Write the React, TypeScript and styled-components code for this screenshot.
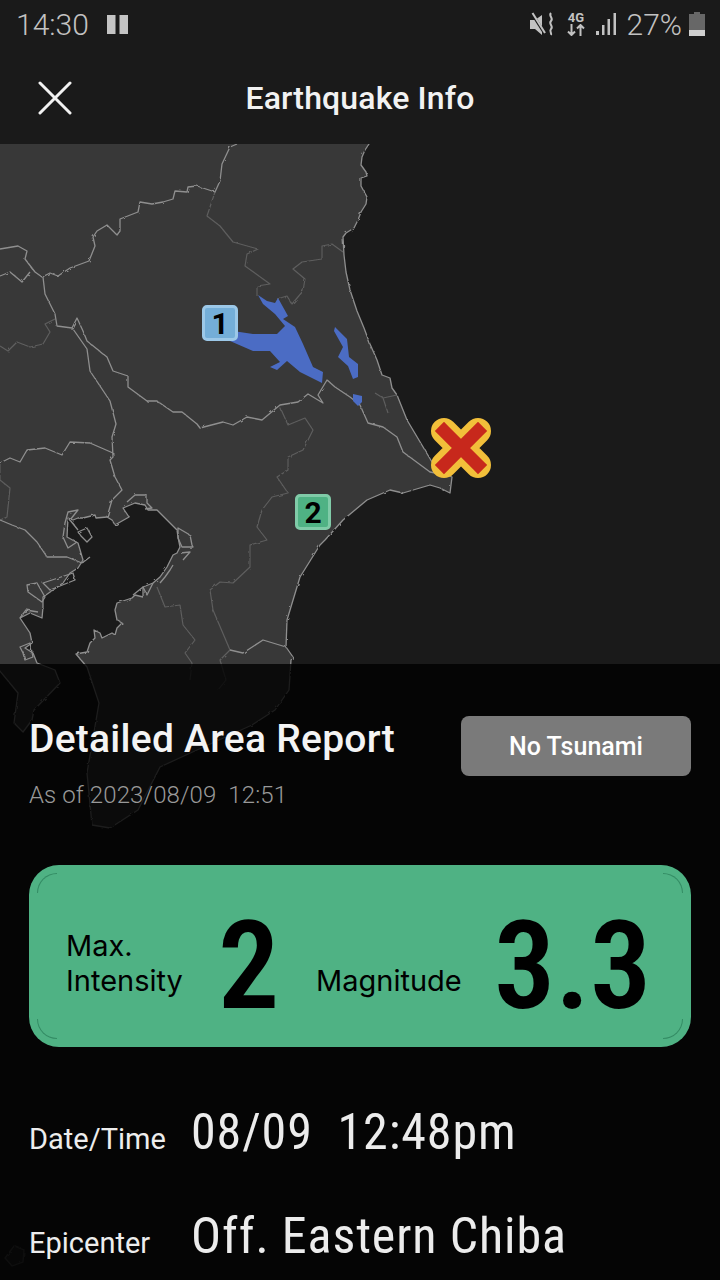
import styled, { createGlobalStyle } from 'styled-components';

const GlobalStyle = createGlobalStyle`
  html, body {
    margin: 0;
    padding: 0;
    background: #1a1a1a;
  }
  * {
    box-sizing: border-box;
  }
`;

const FONT = `Roboto, "Liberation Sans", sans-serif`;

const Page = styled.div`
  display: flex;
  flex-direction: column;
  width: 720px;
  height: 1280px;
  overflow: hidden;
  background: #1a1a1a;
  font-family: ${FONT};
`;

const StatusBar = styled.div`
  display: flex;
  align-items: center;
  justify-content: space-between;
  height: 50px;
  padding: 0 15px 2px 16px;
  color: #c2c2c2;
  font-size: 30px;
  font-weight: 300;
`;

const StatusGroup = styled.div`
  display: flex;
  align-items: center;
`;

const Clock = styled.span`
  margin-right: 18px;
`;

const Percent = styled.span`
  margin: 0 7px 0 10px;
`;

const NetworkBadge = styled.div`
  display: flex;
  flex-direction: column;
  align-items: center;
  gap: 1px;
  width: 19px;
  margin: 0 9px 0 13px;
  color: #c2c2c2;
  font-size: 13px;
  font-weight: 700;
  line-height: 11px;
`;

const Header = styled.header`
  position: relative;
  display: flex;
  align-items: center;
  justify-content: center;
  height: 94px;
  padding-top: 2px;
`;

const CloseButton = styled.button`
  position: absolute;
  left: 38px;
  top: 31px;
  display: flex;
  width: 34px;
  height: 34px;
  padding: 0;
  border: 0;
  background: none;
`;

const Title = styled.h1`
  margin: 0;
  color: #f2f2f2;
  font-size: 32px;
  font-weight: 500;
  letter-spacing: 0.15px;
`;

const MapStage = styled.div`
  position: relative;
  flex: 0 0 520px;
`;

const MapDrawing = styled.svg`
  position: absolute;
  top: 0;
  left: 0;
`;

const MapPin = styled.div<{ $x: number; $y: number; $fill: string; $edge: string }>`
  position: absolute;
  left: ${(p) => p.$x}px;
  top: ${(p) => p.$y}px;
  display: flex;
  align-items: center;
  justify-content: center;
  width: 36px;
  height: 36px;
  border: 3px solid ${(p) => p.$edge};
  border-radius: 5px;
  background: ${(p) => p.$fill};
  color: #000;
  font-size: 30px;
  font-weight: 700;
`;

const Panel = styled.section`
  position: relative;
  flex: 1;
  padding: 52px 29px 0 29px;
  background: rgba(0, 0, 0, 0.8);
`;

const ReportRow = styled.div`
  display: flex;
  align-items: flex-start;
  justify-content: space-between;
`;

const ReportTitle = styled.h2`
  margin: 0;
  color: #f4f4f4;
  font-size: 39px;
  font-weight: 500;
  letter-spacing: 0.25px;
  line-height: 46px;
`;

const TsunamiTag = styled.div`
  display: flex;
  align-items: center;
  justify-content: center;
  width: 230px;
  height: 60px;
  border-radius: 8px;
  background: #7a7a7a;
  color: #fff;
  font-size: 25px;
  font-weight: 500;
  font-stretch: 92%;
`;

const AsOf = styled.div`
  margin-top: 4px;
  color: #999;
  font-size: 24px;
  font-weight: 300;
  letter-spacing: 0.1px;
  line-height: 30px;
  white-space: pre;
`;

const IntensityCard = styled.div`
  position: relative;
  display: flex;
  align-items: center;
  height: 182px;
  margin-top: 55px;
  padding: 0 0 0 37px;
  border-radius: 30px;
  background: #4fb284;
  color: #000;
`;

const CardCorner = styled.span<{ $v: 'top' | 'bottom'; $h: 'left' | 'right' }>`
  position: absolute;
  ${(p) => p.$v}: 8px;
  ${(p) => p.$h}: 8px;
  width: 20px;
  height: 20px;
  border-${(p) => p.$v}: 1px solid rgba(0, 70, 40, 0.35);
  border-${(p) => p.$h}: 1px solid rgba(0, 70, 40, 0.35);
  border-${(p) => p.$v}-${(p) => p.$h}-radius: 20px;
`;

const CardLabel = styled.div<{ $width: number }>`
  flex: 0 0 ${(p) => p.$width}px;
  margin-top: 14px;
  font-family: Inter, ${FONT};
  font-size: 29px;
  font-weight: 400;
  line-height: 35px;
`;

const CardNumber = styled.div<{ $width: number }>`
  flex: 0 0 ${(p) => p.$width}px;
  margin-top: 22px;
  font-size: 122px;
  font-weight: 600;
  font-stretch: 75%;
  line-height: 1;
`;

const InfoRow = styled.div<{ $top: number }>`
  display: grid;
  grid-template-columns: 162px 1fr;
  align-items: baseline;
  margin-top: ${(p) => p.$top}px;
`;

const InfoLabel = styled.div`
  color: #ededed;
  font-size: 29px;
  font-weight: 400;
`;

const InfoValue = styled.div`
  color: #ececec;
  font-size: 50px;
  font-weight: 400;
  font-stretch: 75%;
  letter-spacing: 0.9px;
  white-space: pre;
`;

const PrefectureLine = styled.path<{ $dim?: boolean }>`
  fill: none;
  stroke: ${(p) => (p.$dim ? '#5e5e5e' : '#8f8f8f')};
  stroke-width: ${(p) => (p.$dim ? 1.2 : 1.3)};
  stroke-linejoin: round;
`;

const LAND =
  'M-6 138L372 138L369 144L365 150L362 157L361 165L366 172L367 176L361 178L361 186L367 197L366 204L361 212L358 220L354 228L346 233L343 237L344 255L346 272L350 290L357 311L364 328L370 344L377 360L382 375L390 378L392 388L397 395L407 420L432 462L445 474L452 477L450 493L440 488L430 485L403 493L390 490L367 500L343 520L325 540L320 545L300 577L287 620L286 647L293 657L291 660L289 690L275 710L252 725L186 755L160 767L138 810L110 828L92 825L87 773L99 703L87 667L76 654L87 652L90 643L95 638L94 630L100 633L102 638L112 633L115 635L117 628L122 623L117 620L115 610L117 603L132 598L135 595L143 597L143 587L153 583L160 577L167 567L173 555L177 553L180 547L178 537L177 530L157 510L148 510L145 505L135 503L123 508L129 517L115 525L112 520L107 517L96 518L95 515L83 518L78 518L73 520L68 518L67 537L78 543L83 560L78 568L70 573L63 583L43 597L43 607L42 618L30 613L20 618L30 633L32 643L25 648L33 653L37 663L55 670L60 683L34 710L32 720L23 732L14 723L18 693L-6 664Z';

const BRIGHT_LINES = [
  'M237 144L230 147L222 164L220 181L215 192L197 186L188 187L187 192L175 191L173 199L163 202L152 204L140 202L138 212L120 219L120 231L117 235L107 225L97 231L93 237L95 246L89 261L70 268L58 276L50 273L42 277L35 272L25 259L27 251L18 246L0 249',
  'M30 272L22 282L10 272L0 276',
  'M43 277L45 294L55 314L57 326L72 328L77 318L83 331L87 341L107 357L113 371L128 376L128 387L147 401L157 401L173 412L182 412L197 424L200 428L223 422L233 425L247 417L262 420L280 405L298 402L308 394L323 403L318 395L327 380L335 387L350 397L360 405L368 423L383 427L397 437L403 452L430 472L445 475',
  'M73 329L87 349L90 371L110 401L116 424L112 437L113 457L110 460L115 477L122 490L112 500L107 517',
  'M113 453L90 443L70 442L62 455L45 448L27 450L20 462L10 458L0 463',
  'M0 520L12 525L25 530L37 542L47 557L67 557L82 563',
  'M286 647L263 640L243 653L230 650',
];

const DIM_LINES = [
  'M215 192L207 216L220 226L233 242L258 249L247 254L245 266L270 284L257 286L257 296',
  'M277 299L287 296L292 304L303 291L305 279L293 269L302 262L322 259L322 246L332 244L343 252',
  'M0 346L8 351L17 342L30 347L43 344L50 332L45 324L55 319',
  'M0 463L0 480L10 488L7 517L0 520',
  'M280 407L288 425L305 418L313 430L303 450L288 457L288 470L277 477L288 493L272 497L262 510L257 527L267 540L250 545L250 567L233 583L220 582L210 590L213 610L230 650L220 660L226 680L218 690',
  'M157 587L165 607L180 605L183 625L195 640L185 653L192 663L190 680',
  'M375 393L383 398L388 413M383 398L397 395',
];

// harbour piers around the bay, drawn as small outlines
const PIERS = [
  'M78 532L87 528L92 537L87 542L80 535Z',
  'M63 537L65 523L68 512L78 510L70 520L78 530',
  'M63 537L68 548L77 542',
  'M82 563L90 557',
  'M43 583L73 573L75 580L50 590Z',
  'M27 585L37 583L45 597L42 602L28 592Z',
  'M20 647L30 643L33 657L25 660L23 653Z',
  'M178 528L190 535L192 545L193 547L182 547L178 538Z',
  'M180 553L190 552L183 560',
  'M127 502L135 495L147 495L147 503L152 508L145 509',
  'M160 583L165 577L170 570L173 565',
  'M133 595L143 587L147 595L153 583',
  'M20 618L26 610L38 612',
];

const AREAS = [
  'M258 295L267 301L275 303L278 298L288 316L283 319L295 327L303 344L313 367L323 372L322 383L300 372L287 361L277 370L270 367L280 362L270 351L253 351L230 341L233 331L253 334L277 334L285 326L275 314L263 304Z',
  'M335 327L347 339L349 357L358 364L358 377L353 379L348 366L338 357L343 347L334 331Z',
  'M353 394L362 396L362 402L358 406L353 401Z',
];

const SoundOffIcon = () => (
  <svg width="25" height="24" viewBox="0 0 25 24">
    <path d="M1 8H6L13 3V23L6 17H1Z" fill="#c2c2c2" />
    <path d="M2 0L16 22" stroke="#1a1a1a" strokeWidth="3" />
    <path d="M3.5 1L16 21" stroke="#c2c2c2" strokeWidth="2" />
    <path d="M22 1C19 4 25 6 22 9C19 12 25 14 22 17C20 19 23 21 22 23" fill="none" stroke="#c2c2c2" strokeWidth="2" />
  </svg>
);

const DataArrows = () => (
  <svg width="18" height="12" viewBox="0 0 18 12">
    <path d="M4.5 0V11M1 7.5L4.5 11L8 7.5M13.5 12V1M10 4.5L13.5 1L17 4.5" fill="none" stroke="#c2c2c2" strokeWidth="2" />
  </svg>
);

const SignalIcon = () => (
  <svg width="22" height="22" viewBox="0 0 22 22">
    <path d="M1 18H4V22H1ZM7 12H9.5V22H7ZM12.5 6H15V22H12.5ZM18.5 0H21V22H18.5Z" fill="#c2c2c2" />
  </svg>
);

const BatteryIcon = () => (
  <svg width="16" height="24" viewBox="0 0 16 24">
    <path d="M5 0H11V2H16V24H0V2H5Z" fill="#676767" />
    <path d="M0 18H16V24H0Z" fill="#cfcfcf" />
  </svg>
);

const PauseIcon = () => (
  <svg width="21" height="19" viewBox="0 0 21 19">
    <path d="M0 0H8.5V19H0ZM12.5 0H21V19H12.5Z" fill="#c4c4c4" />
  </svg>
);

const App = () => {
  return (
    <Page>
      <GlobalStyle />
      <StatusBar>
        <StatusGroup>
          <Clock>14:30</Clock>
          <PauseIcon />
        </StatusGroup>
        <StatusGroup>
          <SoundOffIcon />
          <NetworkBadge>
            4G
            <DataArrows />
          </NetworkBadge>
          <SignalIcon />
          <Percent>27%</Percent>
          <BatteryIcon />
        </StatusGroup>
      </StatusBar>
      <Header>
        <CloseButton aria-label="Close">
          <svg width="34" height="34" viewBox="0 0 34 34">
            <path d="M2 2L32 32M32 2L2 32" stroke="#f2f2f2" strokeWidth="3" strokeLinecap="round" />
          </svg>
        </CloseButton>
        <Title>Earthquake Info</Title>
      </Header>
      <MapStage>
        <MapDrawing width="720" height="1136" viewBox="0 144 720 1136">
          <defs>
            <filter id="rough" x="-2%" y="-2%" width="104%" height="104%">
              <feTurbulence type="fractalNoise" baseFrequency="0.18" numOctaves="2" seed="4" />
              <feDisplacementMap in="SourceGraphic" scale="2.5" />
            </filter>
          </defs>
          <rect x="0" y="144" width="720" height="1136" fill="#1a1a1a" />
          <g filter="url(#rough)">
            <path d={LAND} fill="#383838" stroke="#8f8f8f" strokeWidth="1.3" strokeLinejoin="round" />
            <path d="M14 1246L24 1250L23 1262L12 1266L5 1258Z" fill="#262626" stroke="#4a4a4a" strokeWidth="1.3" />
            {DIM_LINES.map((d) => (
              <PrefectureLine key={d} d={d} $dim />
            ))}
            {BRIGHT_LINES.map((d) => (
              <PrefectureLine key={d} d={d} />
            ))}
            {PIERS.map((d) => (
              <PrefectureLine key={d} d={d} />
            ))}
          </g>
          {AREAS.map((d) => (
            <path key={d} d={d} fill="#4b6cc4" />
          ))}
          <path d="M444 431L478 465M478 431L444 465" stroke="#f2bf3a" strokeWidth="26" strokeLinecap="round" />
          <path d="M444 431L478 465M478 431L444 465" stroke="#c7281c" strokeWidth="13" strokeLinecap="square" />
        </MapDrawing>
        <MapPin $x={202} $y={161} $fill="#74aed8" $edge="#9cc8e8">
          1
        </MapPin>
        <MapPin $x={295} $y={350} $fill="#4fb284" $edge="#80cba8">
          2
        </MapPin>
      </MapStage>
      <Panel>
        <ReportRow>
          <ReportTitle>Detailed Area Report</ReportTitle>
          <TsunamiTag>No Tsunami</TsunamiTag>
        </ReportRow>
        <AsOf>{'As of 2023/08/09  12:51'}</AsOf>
        <IntensityCard>
          <CardCorner $v="top" $h="left" />
          <CardCorner $v="top" $h="right" />
          <CardCorner $v="bottom" $h="left" />
          <CardCorner $v="bottom" $h="right" />
          <CardLabel $width={152}>
            Max.
            <br />
            Intensity
          </CardLabel>
          <CardNumber $width={98}>2</CardNumber>
          <CardLabel $width={178}>
            <br />
            Magnitude
          </CardLabel>
          <CardNumber $width={160}>3.3</CardNumber>
        </IntensityCard>
        <InfoRow $top={56}>
          <InfoLabel>Date/Time</InfoLabel>
          <InfoValue>{'08/09  12:48pm'}</InfoValue>
        </InfoRow>
        <InfoRow $top={46}>
          <InfoLabel>Epicenter</InfoLabel>
          <InfoValue>Off. Eastern Chiba</InfoValue>
        </InfoRow>
      </Panel>
    </Page>
  );
};

export default App;
